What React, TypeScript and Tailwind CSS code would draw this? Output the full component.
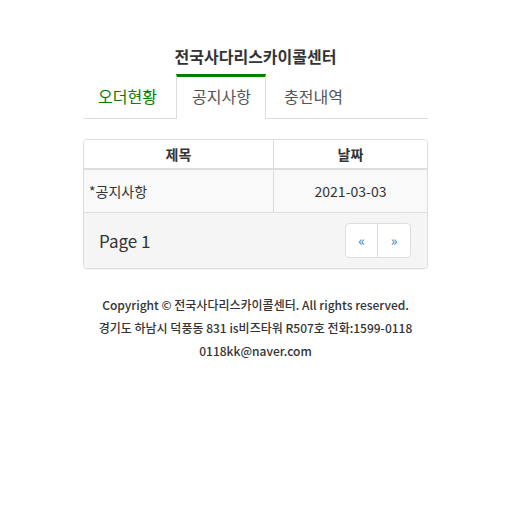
import React from "react";

const tabs = ["오더현황", "공지사항", "충전내역"];

const notices = [{ id: 1, title: "*공지사항", date: "2021-03-03" }];

const App = () => {
  const active = 1;

  return (
    <div
      className="min-h-[512px] bg-white text-[#333]"
      style={{ fontFamily: '"Noto Sans CJK KR", "Noto Sans", sans-serif' }}
    >
      <div className="ml-[83px] w-[345px] pt-[44px]">
        <h1 className="text-center text-[16px] font-bold leading-[24px]">전국사다리스카이콜센터</h1>

        {/* Tabs */}
        <div className="mt-[6px] flex border-b border-[#ddd]">
          {tabs.map((tab, i) => (
            <div
              key={tab}
              className={
                i === active
                  ? "-mb-px mr-[2px] w-[90px] whitespace-nowrap border-x border-t-[3px] border-x-[#ddd] border-t-[#008000] bg-white pb-[10px] pl-[15px] pt-[7px] text-[16px] leading-[24px] text-[#555]"
                  : i === 0
                  ? "mr-[2px] w-[91px] whitespace-nowrap py-[10px] pl-[15px] text-[16px] leading-[24px] text-[#008000]"
                  : "mr-[2px] w-[90px] whitespace-nowrap py-[10px] pl-[16px] text-[16px] leading-[24px] text-[#555]"
              }
            >
              {tab}
            </div>
          ))}
        </div>

        {/* Notice table */}
        <div className="mt-[20px] overflow-hidden rounded-[4px] border border-[#ddd] shadow-[0_1px_1px_rgba(0,0,0,0.05)]">
          <div className="flex border-b-2 border-[#ddd] bg-white text-[14px] font-bold leading-[20px]">
            <div className="w-[190px] border-r border-[#ddd] py-[4px] text-center">제목</div>
            <div className="flex-1 py-[4px] text-center">날짜</div>
          </div>
          {notices.map((n) => (
            <div key={n.id} className="flex border-b border-[#ddd] bg-[#f9f9f9] text-[14px] leading-[20px]">
              <div className="w-[190px] border-r border-[#ddd] px-[5px] py-[11px]">{n.title}</div>
              <div className="flex-1 py-[11px] text-center">{n.date}</div>
            </div>
          ))}
          <div className="flex items-center justify-between bg-[#f5f5f5] py-[10px] pl-[15px] pr-[16px]">
            <span className="text-[17px] leading-[24px]">Page 1</span>
            <div className="flex overflow-hidden rounded-[4px] border border-[#ddd] bg-white text-[14px] text-[#337ab7]">
              <span className="flex h-[33px] w-[32px] items-center justify-center border-r border-[#ddd]">«</span>
              <span className="flex h-[33px] w-[32px] items-center justify-center">»</span>
            </div>
          </div>
        </div>

        {/* Footer */}
        <div className="mt-[24px] text-center text-[12px] font-medium leading-[23px]">
          <p>Copyright © 전국사다리스카이콜센터. All rights reserved.</p>
          <p>경기도 하남시 덕풍동 831 is비즈타워 R507호 전화:1599-0118</p>
          <p>0118kk@naver.com</p>
        </div>
      </div>
    </div>
  );
};

export default App;
